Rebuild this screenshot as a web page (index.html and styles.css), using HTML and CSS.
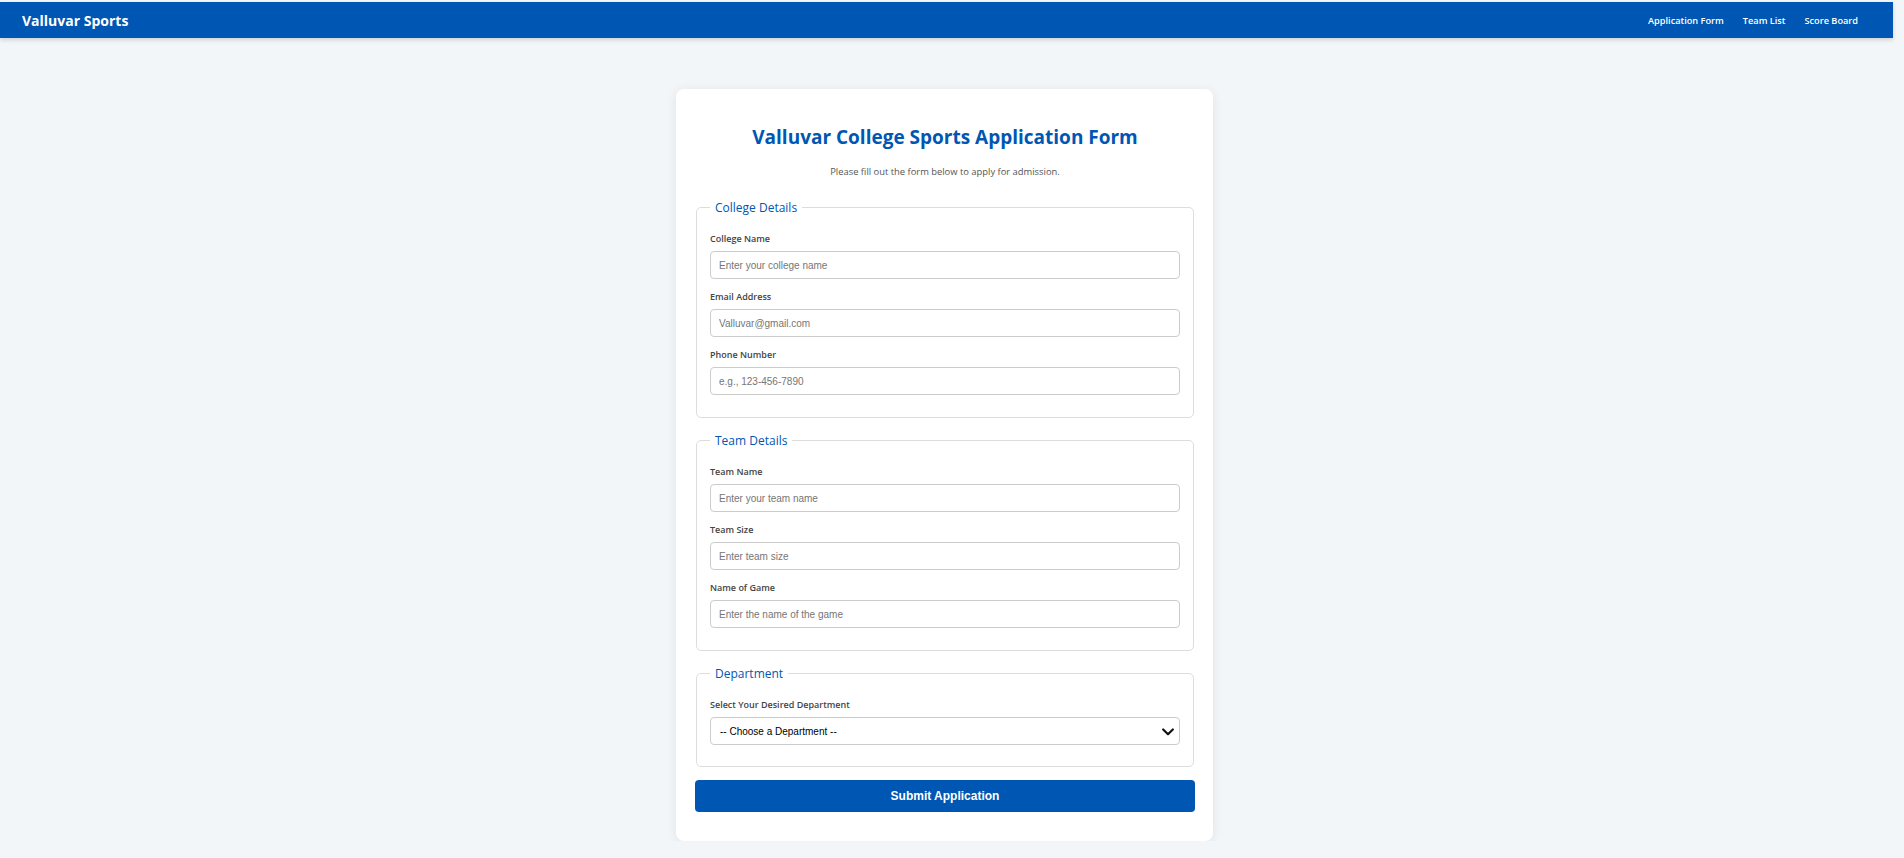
FILE: index.html
```html
<!DOCTYPE html>
<html lang="en">
<head>
<meta charset="utf-8">
<title>Valluvar Sports - Application Form</title>
<link rel="stylesheet" href="styles.css">
</head>
<body>
<div class="page">
  <header class="navbar">
    <div class="brand">Valluvar Sports</div>
    <nav class="nav-links">
      <a href="#">Application Form</a>
      <a href="#">Team List</a>
      <a href="#">Score Board</a>
    </nav>
  </header>
  <main class="main">
    <div class="card">
      <h1 class="title">Valluvar College Sports Application Form</h1>
      <p class="subtitle">Please fill out the form below to apply for admission.</p>
      <form class="form">
        <fieldset class="section">
          <legend class="legend">College Details</legend>
          <div class="field">
            <label class="label">College Name</label>
            <input class="input" type="text" placeholder="Enter your college name">
          </div>
          <div class="field">
            <label class="label">Email Address</label>
            <input class="input" type="email" placeholder="Valluvar@gmail.com">
          </div>
          <div class="field">
            <label class="label">Phone Number</label>
            <input class="input" type="tel" placeholder="e.g., 123-456-7890">
          </div>
        </fieldset>
        <fieldset class="section">
          <legend class="legend">Team Details</legend>
          <div class="field">
            <label class="label">Team Name</label>
            <input class="input" type="text" placeholder="Enter your team name">
          </div>
          <div class="field">
            <label class="label">Team Size</label>
            <input class="input" type="text" placeholder="Enter team size">
          </div>
          <div class="field">
            <label class="label">Name of Game</label>
            <input class="input" type="text" placeholder="Enter the name of the game">
          </div>
        </fieldset>
        <fieldset class="section">
          <legend class="legend">Department</legend>
          <div class="field field-select">
            <label class="label">Select Your Desired Department</label>
            <div class="select-wrap">
              <select class="input select">
                <option>-- Choose a Department --</option>
              </select>
              <svg class="chevron" width="12" height="8" viewBox="0 0 12 8"><polyline points="1.2,1.5 6,6.2 10.8,1.5" fill="none" stroke="#111" stroke-width="2.2" stroke-linecap="round" stroke-linejoin="round"/></svg>
            </div>
          </div>
        </fieldset>
        <button class="submit" type="button">Submit Application</button>
      </form>
    </div>
  </main>
</div>
</body>
</html>
```

FILE: styles.css
```css
* { box-sizing: border-box; }

html, body {
  margin: 0;
  padding: 0;
}

body {
  background: #f3f6f9;
  font-family: "Open Sans", "Noto Sans", sans-serif;
  color: #333;
  overflow: hidden;
}

.page {
  margin-right: 11px;
  padding-top: 2px;
}

.navbar {
  height: 36px;
  background: #0056b3;
  display: flex;
  align-items: center;
  justify-content: space-between;
  padding: 0 35px 0 22px;
  box-shadow: 0 2px 4px rgba(0, 0, 0, 0.15);
  color: #fff;
}

.brand {
  font-size: 14px;
  font-weight: 700;
}

.nav-links {
  display: flex;
  gap: 19px;
}

.nav-links a {
  color: #fff;
  text-decoration: none;
  font-size: 9.2px;
  font-weight: 600;
}

.main {
  display: flex;
  justify-content: center;
  padding: 51px 4px 0 0;
}

.card {
  width: 537px;
  background: #fff;
  border-radius: 8px;
  padding: 20px 18px 29px 19px;
  box-shadow: 0 2px 12px rgba(0, 0, 0, 0.08);
}

.title {
  margin: 14px 0 0;
  font-size: 19px;
  line-height: 29px;
  font-weight: 700;
  color: #0056b3;
  text-align: center;
}

.subtitle {
  margin: 13px 0 0;
  font-size: 9.4px;
  line-height: 14px;
  color: #555;
  text-align: center;
}

.form {
  margin-top: 19px;
}

.section {
  margin: 0 1px 13px;
  border: 1px solid #ddd;
  border-radius: 5px;
  padding: 15px 13px 12px;
  min-width: 0;
}

.legend {
  padding: 0 5px;
  font-size: 12px;
  line-height: 19px;
  font-weight: 500;
  color: #0056b3;
}

.field {
  margin-bottom: 11px;
}

.field:last-child {
  margin-bottom: 10px;
}

.field-select,
.field-select:last-child {
  margin-bottom: 9px;
}

.label {
  display: block;
  font-size: 9px;
  line-height: 14px;
  font-weight: 600;
  color: #444;
  margin-bottom: 5px;
}

.input {
  display: block;
  width: 100%;
  height: 28px;
  border: 1px solid #ccc;
  border-radius: 4px;
  padding: 0 8px;
  font-family: "Liberation Sans", Arial, sans-serif;
  font-size: 10px;
  color: #222;
  background: #fff;
  outline: none;
}

.input::placeholder {
  color: #767676;
}

.select-wrap {
  position: relative;
}

.select {
  appearance: none;
  -webkit-appearance: none;
  padding-left: 9px;
  color: #000;
}

.chevron {
  position: absolute;
  right: 6px;
  top: 11px;
  pointer-events: none;
}

.submit {
  display: block;
  width: 100%;
  height: 32px;
  margin-top: 13px;
  border: none;
  border-radius: 4px;
  background: #0056b3;
  color: #fff;
  font-family: "Liberation Sans", Arial, sans-serif;
  font-size: 12px;
  font-weight: 700;
  cursor: pointer;
}
```
